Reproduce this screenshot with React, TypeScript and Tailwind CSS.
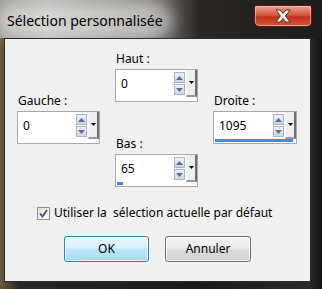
import { FC } from 'react';

interface SpinFieldProps {
  label: string;
  value: string;
  bar: number;
}

const SpinField: FC<SpinFieldProps> = ({ label, value, bar }) => {
  return (
    <div className="flex flex-col">
      <div className="h-[18px] pl-[1px] text-[12px] leading-[16px] text-black">{label}</div>
      <div className="flex h-[33px] flex-col border border-[#a5a9b0] bg-white">
        <div className="flex h-[27px] items-stretch">
          <div className="flex flex-1 items-center pl-[5px] text-[12px] text-black">{value}</div>
          <div className="flex w-[11px] flex-col justify-center gap-[1px] py-[1px]">
            <div className="flex h-[11px] items-center justify-center border border-[#aab4c6] bg-[linear-gradient(#eef2f8,#cdd6e4)]">
              <svg width="7" height="4" viewBox="0 0 7 4">
                <path d="M0 4 L3.5 0 L7 4 Z" fill="#5b6b9a" />
              </svg>
            </div>
            <div className="flex h-[11px] items-center justify-center border border-[#aab4c6] bg-[linear-gradient(#eef2f8,#cdd6e4)]">
              <svg width="7" height="4" viewBox="0 0 7 4">
                <path d="M0 0 L3.5 4 L7 0 Z" fill="#5b6b9a" />
              </svg>
            </div>
          </div>
          <div className="ml-[1px] flex w-[11px] items-center justify-center border-r-2 border-b-2 border-l border-[#f8f8f8] border-r-[#6e6e6e] border-b-[#9a9a9a] bg-[#eeeeee]">
            <svg width="5" height="3" viewBox="0 0 5 3">
              <path d="M0 0 L2.5 3 L5 0 Z" fill="#000" />
            </svg>
          </div>
        </div>
        <div className="flex h-[4px] items-start px-[1px]">
          <div className="h-[3px] bg-[#3d8ee0]" style={{ width: `${bar}%` }} />
        </div>
      </div>
    </div>
  );
};

const App: FC = () => {
  return (
    <div
      className="flex h-[289px] w-[322px] flex-col overflow-hidden bg-[linear-gradient(90deg,#6b5a3c_0%,#2a2622_6%,#1c1a18_60%,#2b2a29_96%,#141312_100%)]"
      style={{ fontFamily: '"Noto Sans", "Open Sans", sans-serif' }}
    >
      <div className="flex h-[38px] items-start justify-between pr-[10px] bg-[linear-gradient(90deg,#9d9c9a_0%,#b9b8b5_15%,#8d8b88_45%,#2a2724_62%,#1e1c1a_100%)]">
        <div className="mt-[12px] ml-[5px] rounded-full bg-white/40 px-[2px] text-[14px] leading-[18px] text-black shadow-[0_0_14px_8px_rgba(235,235,235,0.55)]">
          Sélection personnalisée
        </div>
        <div className="mt-[5px] flex h-[22px] w-[58px] items-center justify-center rounded-b-[5px] rounded-t-[2px] border border-[#5a1a12] bg-[linear-gradient(#e8a392_0%,#d2563f_45%,#c0301a_55%,#d2583c_100%)] shadow-[inset_0_0_0_1px_rgba(255,200,190,0.6)]">
          <svg width="18" height="14" viewBox="0 0 18 14">
            <path
              d="M2 1 L6 1 L9 4.5 L12 1 L16 1 L11.5 7 L16 13 L12 13 L9 9.5 L6 13 L2 13 L6.5 7 Z"
              fill="#ffffff"
              stroke="#5a2a22"
              strokeWidth="1"
            />
          </svg>
        </div>
      </div>
      <div className="ml-[4px] mr-[11px] flex h-[244px] flex-col border border-[#2c2c2c] bg-[#f0f0f0]">
        <div className="flex gap-[15px] pt-[12px] pl-[12px]">
          <div className="mt-[42px] w-[83px]">
            <SpinField label="Gauche :" value="0" bar={0} />
          </div>
          <div className="flex w-[83px] flex-col gap-[34px]">
            <SpinField label="Haut :" value="0" bar={0} />
            <SpinField label="Bas :" value="65" bar={8} />
          </div>
          <div className="mt-[42px] w-[84px]">
            <SpinField label="Droite :" value="1095" bar={97} />
          </div>
        </div>
        <div className="mt-[17px] ml-[32px] flex items-center gap-[4px] text-[12px] text-black">
          <div className="flex h-[13px] w-[13px] items-center justify-center border border-[#8e8f8f] bg-[linear-gradient(135deg,#dcdcdc,#ffffff)]">
            <svg width="9" height="9" viewBox="0 0 9 9">
              <path d="M1 4.5 L3.5 7.5 L8 1" fill="none" stroke="#3d4f8f" strokeWidth="1.8" />
            </svg>
          </div>
          <span className="whitespace-pre">Utiliser la  sélection actuelle par défaut</span>
        </div>
        <div className="mt-[14px] ml-[59px] flex gap-[16px]">
          <button
            type="button"
            className="h-[26px] w-[85px] rounded-[3px] border border-[#3c7fb1] bg-[linear-gradient(#eaf6fd_0%,#d9f0fc_45%,#bee6fd_50%,#a7d9f5_100%)] text-[12px] text-black shadow-[inset_0_0_0_1px_rgba(255,255,255,0.7)]"
          >
            OK
          </button>
          <button
            type="button"
            className="h-[26px] w-[86px] rounded-[3px] border border-[#707070] bg-[linear-gradient(#f2f2f2_0%,#ebebeb_45%,#dddddd_50%,#cfcfcf_100%)] text-[12px] text-black shadow-[inset_0_0_0_1px_rgba(255,255,255,0.7)]"
          >
            Annuler
          </button>
        </div>
      </div>
    </div>
  );
};

export default App;
